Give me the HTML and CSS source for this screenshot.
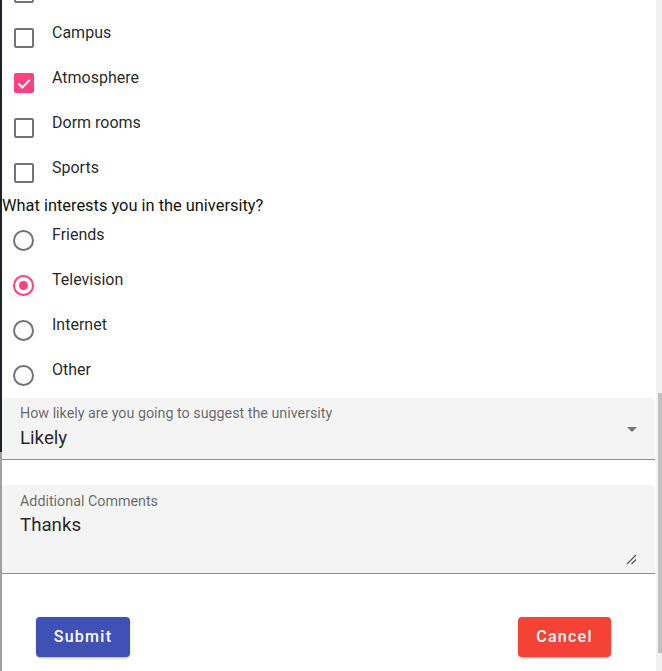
FILE: index.html
```html
<!DOCTYPE html>
<html lang="en">
<head>
<meta charset="utf-8">
<title>University survey</title>
<link rel="stylesheet" href="styles.css">
</head>
<body>
<div class="frame">
  <main class="page">
    <div class="checks">
      <div class="opt"><span class="box"></span></div>
      <div class="opt"><span class="box"></span><span class="lbl">Campus</span></div>
      <div class="opt"><span class="box checked"><svg viewBox="0 0 24 24" class="tick"><path d="M3.5 12 L9.5 18 L20.5 6.5" /></svg></span><span class="lbl">Atmosphere</span></div>
      <div class="opt"><span class="box"></span><span class="lbl">Dorm rooms</span></div>
      <div class="opt"><span class="box"></span><span class="lbl">Sports</span></div>
    </div>
    <p class="question">What interests you in the university?</p>
    <div class="radios">
      <div class="ropt"><span class="ring"></span><span class="lbl">Friends</span></div>
      <div class="ropt"><span class="ring on"><span class="dot"></span></span><span class="lbl">Television</span></div>
      <div class="ropt"><span class="ring"></span><span class="lbl">Internet</span></div>
      <div class="ropt"><span class="ring"></span><span class="lbl">Other</span></div>
    </div>
    <div class="field select">
      <div class="field-body">
        <span class="flabel">How likely are you going to suggest the university</span>
        <span class="fvalue">Likely</span>
      </div>
      <span class="arrow"></span>
    </div>
    <div class="field textarea">
      <div class="field-body">
        <span class="flabel">Additional Comments</span>
        <span class="fvalue">Thanks</span>
      </div>
      <svg class="grip" viewBox="0 0 11 11"><path d="M10 1 L1 10 M10 5.5 L5.5 10" /></svg>
    </div>
    <div class="actions">
      <button class="btn submit">Submit</button>
      <button class="btn cancel">Cancel</button>
    </div>
  </main>
  <div class="scrollbar"><div class="thumb"></div></div>
</div>
</body>
</html>
```

FILE: styles.css
```css
html, body {
  margin: 0;
  height: 671px;
  overflow: hidden;
}
body {
  background: linear-gradient(to bottom, #1f2327 0, #1f2327 452px, #a0a0a0 452px, #a0a0a0 100%);
  font-family: Roboto, "Liberation Sans", sans-serif;
  color: rgba(0, 0, 0, 0.87);
}
.frame {
  display: flex;
  height: 671px;
  margin-left: 2px;
}
.page {
  flex: 1;
  background: #fff;
  overflow: hidden;
}
.scrollbar {
  width: 6px;
  background: #f1f1f1;
  display: flex;
  flex-direction: column;
  align-items: flex-end;
}
.thumb {
  margin-top: 393px;
  width: 4px;
  height: 260px;
  background: #c1c1c1;
}
.checks {
  margin-top: -25px;
  display: flex;
  flex-direction: column;
  gap: 5px;
}
.opt, .ropt {
  display: flex;
  align-items: flex-start;
  height: 40px;
}
.box {
  box-sizing: border-box;
  width: 20px;
  height: 20px;
  margin: 8px 0 0 12px;
  border: 2px solid #737373;
  border-radius: 2px;
  display: flex;
  align-items: center;
  justify-content: center;
}
.box.checked {
  background: #ff4081;
  border-color: #ff4081;
}
.tick {
  width: 19px;
  height: 19px;
  fill: none;
  stroke: #fff;
  stroke-width: 3;
}
.lbl {
  font-size: 16px;
  line-height: 20px;
  margin: 3px 0 0 18px;
}
.question {
  margin: 1px 0 0;
  font-size: 16.4px;
  line-height: 20px;
  color: #111;
}
.radios {
  margin-top: 7px;
  display: flex;
  flex-direction: column;
  gap: 5px;
}
.ring {
  box-sizing: border-box;
  width: 21px;
  height: 21px;
  margin: 7px 0 0 11px;
  border: 2px solid #737373;
  border-radius: 50%;
  display: flex;
  align-items: center;
  justify-content: center;
}
.ring.on {
  border-color: #ff4081;
}
.dot {
  width: 9px;
  height: 9px;
  border-radius: 50%;
  background: #ff4081;
}
.ropt .lbl {
  margin: 2px 0 0 18px;
}
.field {
  display: flex;
  background: #f4f4f4;
  border-radius: 4px 4px 0 0;
  border-bottom: 1px solid #8f8f8f;
  margin-right: 1px;
}
.field-body {
  flex: 1;
  display: flex;
  flex-direction: column;
  padding-left: 18px;
}
.flabel {
  font-size: 14.3px;
  line-height: 16px;
  color: rgba(0, 0, 0, 0.6);
}
.fvalue {
  font-size: 18.7px;
  line-height: 22px;
}
.select {
  height: 61px;
}
.select .field-body {
  padding-top: 7px;
}
.select .fvalue {
  margin-top: 6px;
}
.arrow {
  width: 0;
  height: 0;
  margin: 29px 18px 0 0;
  border-left: 5px solid transparent;
  border-right: 5px solid transparent;
  border-top: 5px solid #757575;
}
.textarea {
  margin-top: 25px;
  height: 88px;
}
.textarea .field-body {
  padding-top: 8px;
}
.textarea .fvalue {
  margin-top: 5px;
}
.grip {
  align-self: flex-end;
  width: 11px;
  height: 11px;
  margin: 0 18px 8px 0;
  fill: none;
  stroke: #555;
  stroke-width: 1.2;
}
.actions {
  margin-top: 43px;
  display: flex;
  justify-content: space-between;
  padding: 0 45px 0 34px;
}
.btn {
  height: 40px;
  border: none;
  border-radius: 4px;
  color: #fff;
  font-family: Roboto, "Liberation Sans", sans-serif;
  font-size: 16px;
  font-weight: 500;
  letter-spacing: 1.25px;
  padding: 0 0 2px;
  box-shadow: 0 2px 2px -1px rgba(0,0,0,0.2), 0 1px 3px 0 rgba(0,0,0,0.12);
}
.submit {
  width: 94px;
  background: #3f51b5;
}
.cancel {
  width: 93px;
  background: #f44336;
}
```
